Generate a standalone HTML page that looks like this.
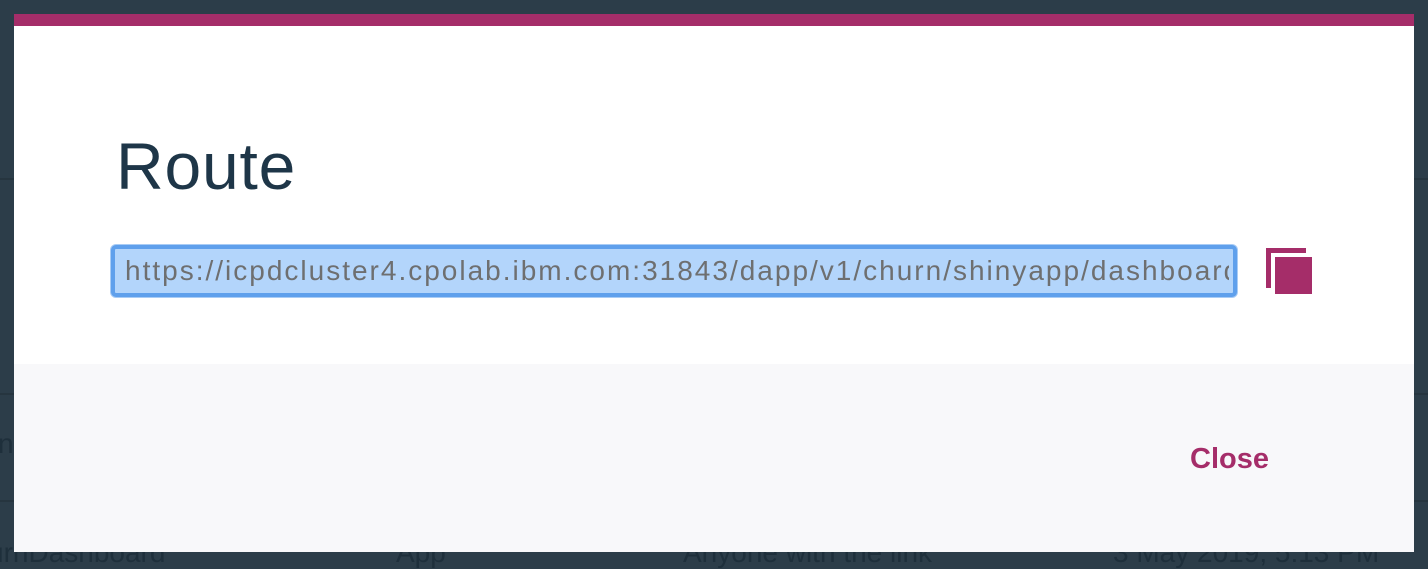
<!DOCTYPE html>
<html><head><meta charset="utf-8"><style>
body{margin:0;width:1428px;height:566px;background:#2c3d49;position:relative;overflow:hidden;font-family:"Liberation Sans",sans-serif}
.bgt{position:absolute;top:537px;font-size:28px;color:#1e2f3b;white-space:nowrap}
.line{position:absolute;left:0;width:1428px;height:2px;background:#26353f}
.modal{position:absolute;left:14px;top:14px;width:1400px;height:538px;background:#fff;border-top:12px solid #a52d69;box-sizing:border-box}
.foot{position:absolute;left:0;top:338px;width:1400px;height:188px;background:#f8f8fa}
h1{position:absolute;left:102px;top:102px;margin:0;font-weight:400;font-size:66px;color:#1e3648;letter-spacing:0.8px}
.inp{position:absolute;left:97px;top:219px;width:1126px;height:52px;box-sizing:border-box;border:4px solid #5fa0ec;border-radius:5px;background:#b3d5fb;box-shadow:0 0 0 1px #a9ccf5}
.inp span{position:absolute;left:10px;top:4px;font-size:28px;letter-spacing:2.0px;color:#6e6f70;white-space:nowrap;overflow:hidden;width:1104px;line-height:36px}
.close{position:absolute;left:1176px;top:417px;font-size:29px;font-weight:700;color:#a52d69}
</style></head><body>
<div class="line" style="top:178px"></div>
<div class="line" style="top:393px"></div>
<div class="line" style="top:500px"></div>
<div class="bgt" style="left:-2px;top:428px">n</div>
<div class="bgt" style="left:-12px">urnDashboard</div>
<div class="bgt" style="left:396px">App</div>
<div class="bgt" style="left:683px">Anyone with the link</div>
<div class="bgt" style="left:1113px">3 May 2019, 5:13 PM</div>
<div class="modal">
<h1>Route</h1>
<div class="inp"><span>https://icpdcluster4.cpolab.ibm.com:31843/dapp/v1/churn/shinyapp/dashboard</span></div>
<svg style="position:absolute;left:1252px;top:222px" width="48" height="48" viewBox="0 0 48 48">
<path d="M0 0H40V5H5V40H0Z" fill="#a52d69"/>
<rect x="9" y="9" width="37" height="37" fill="#a52d69"/>
</svg>
<div class="foot"></div>
<div class="close">Close</div>
</div>
</body></html>
